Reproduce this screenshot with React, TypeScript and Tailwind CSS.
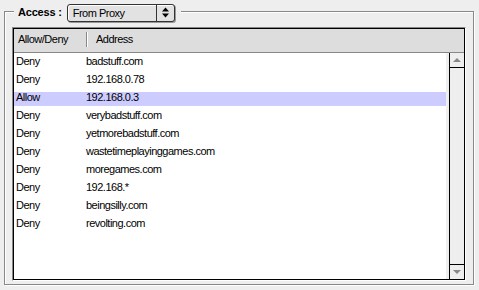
import React from "react";

const rows: { a: string; b: string; sel?: boolean }[] = [
  { a: "Deny", b: "badstuff.com" },
  { a: "Deny", b: "192.168.0.78" },
  { a: "Allow", b: "192.168.0.3", sel: true },
  { a: "Deny", b: "verybadstuff.com" },
  { a: "Deny", b: "yetmorebadstuff.com" },
  { a: "Deny", b: "wastetimeplayinggames.com" },
  { a: "Deny", b: "moregames.com" },
  { a: "Deny", b: "192.168.*" },
  { a: "Deny", b: "beingsilly.com" },
  { a: "Deny", b: "revolting.com" },
];

export default function App() {
  return (
    <div
      className="w-[479px] h-[290px] bg-[#eeeeee] pt-[11px] pl-[4px] text-black text-[11px] tracking-[-0.5px]"
      style={{ fontFamily: '"Liberation Sans", Arial, sans-serif' }}
    >
      <div className="relative w-[470px] h-[274px] border border-[#888888] shadow-[inset_1px_1px_0_#ffffff,1px_1px_0_#ffffff] pl-[7px] pt-[15px]">
        {/* legend */}
        <div className="absolute left-[9px] top-[-9px] h-[19px] flex items-center bg-[#eeeeee] pl-[4px] pr-[6px]">
          <span className="font-bold leading-[11px] tracking-[-0.2px]">Access :</span>
          <div className="ml-[5px] w-[108px] h-[18px] rounded-[3px] border border-[#333333] bg-[#e2e2e2] shadow-[1px_1px_0_#999999,inset_1px_1px_0_#ffffff] flex">
            <div className="flex-1 pl-[5px] pt-[3px] leading-[11px]">From Proxy</div>
            <div className="w-[18px] border-l border-[#333333] flex items-center justify-center">
              <svg width="7" height="11" viewBox="0 0 7 11">
                <path d="M3.5 0.5 L7 4.5 L0 4.5 Z" fill="#000" />
                <path d="M0 6.5 L7 6.5 L3.5 10.5 Z" fill="#000" />
              </svg>
            </div>
          </div>
        </div>

        {/* table */}
        <div className="w-[454px] h-[254px] border-t border-l border-[#888888] border-b border-r border-b-white border-r-white">
          <div className="w-full h-full border border-black flex flex-col">
            <div className="h-[24px] bg-[#dddddd] border-b border-[#888888] flex items-start">
              <div className="w-[72px] pl-[4px] pt-[5px] leading-[11px]">Allow/Deny</div>
              <div className="mt-[3px] w-[2px] h-[15px] bg-[#888888] border-r border-white" />
              <div className="pl-[8px] pt-[5px] leading-[11px]">Address</div>
            </div>
            <div className="flex-1 flex">
              <div className="flex-1 bg-white border-r-[3px] border-[#eeeeee] pt-[3px] flex flex-col">
                {rows.map((r, i) => (
                  <div key={i} className="h-[18px]">
                    <div className={`h-[14px] flex pl-[2px] ${r.sel ? "bg-[#ccccff]" : ""}`}>
                      <span className="w-[70px] leading-[11px] block">{r.a}</span>
                      <span className="leading-[11px] block">{r.b}</span>
                    </div>
                  </div>
                ))}
              </div>
              <div className="w-[15px] border-l border-black bg-[#eeeeee] flex flex-col justify-between">
                <div className="h-[15px] border-b border-black flex items-center justify-center">
                  <svg width="8" height="4" viewBox="0 0 8 4">
                    <path d="M4 0 L8 4 L0 4 Z" fill="#888888" />
                  </svg>
                </div>
                <div className="h-[15px] border-t border-black flex items-center justify-center">
                  <svg width="8" height="4" viewBox="0 0 8 4">
                    <path d="M0 0 L8 0 L4 4 Z" fill="#888888" />
                  </svg>
                </div>
              </div>
            </div>
          </div>
        </div>
      </div>
    </div>
  );
}
